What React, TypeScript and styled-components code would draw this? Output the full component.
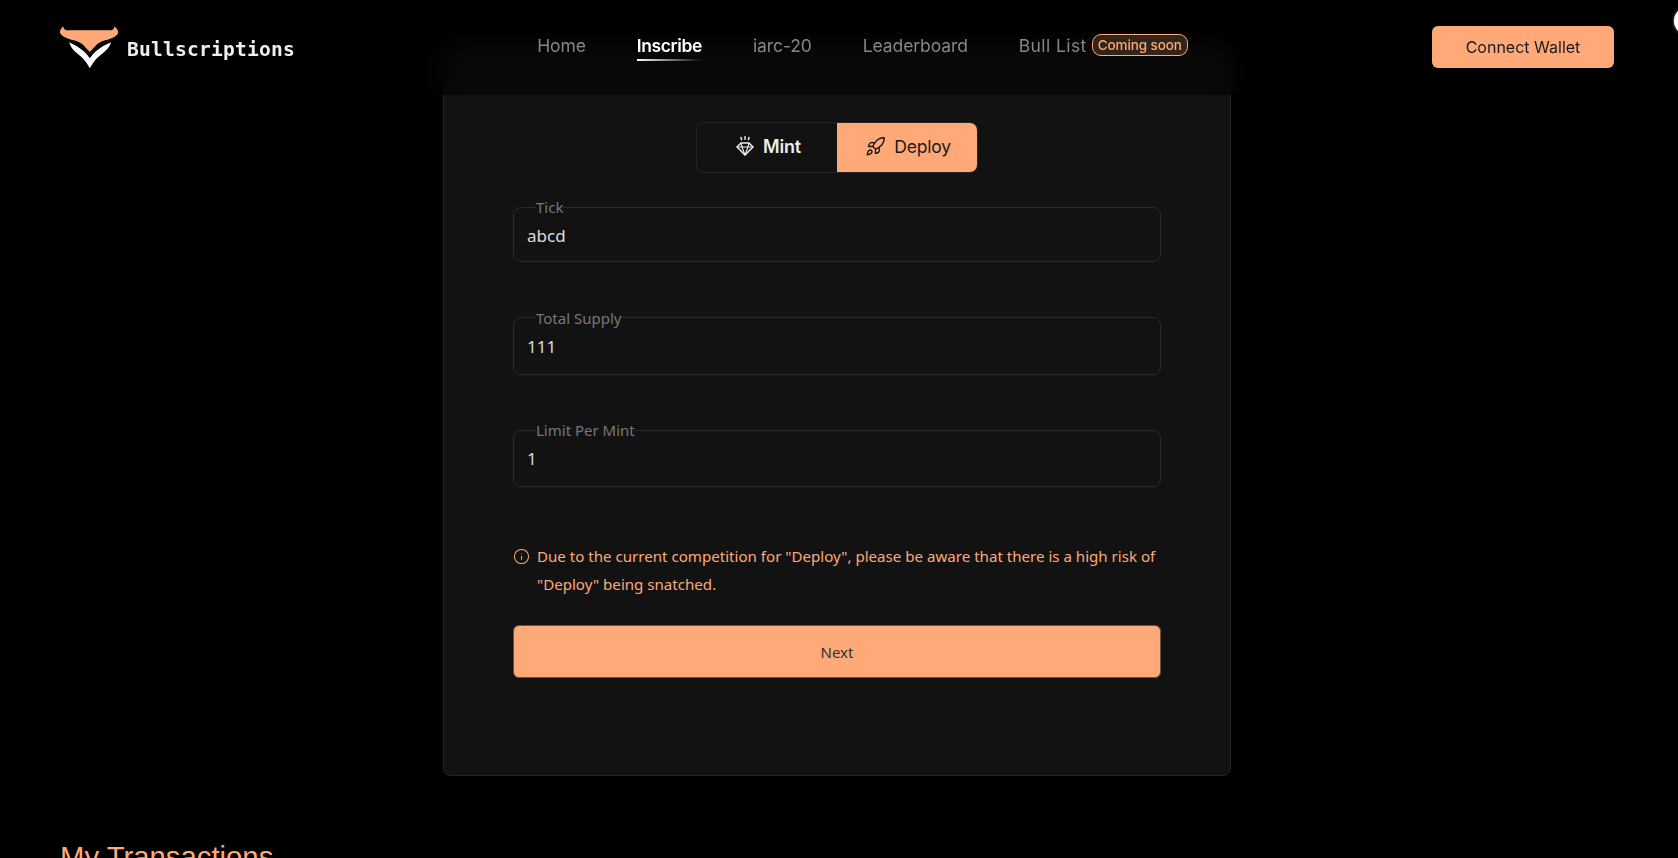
import styled, { createGlobalStyle } from 'styled-components';
import { Info, Rocket } from 'lucide-react';

const accent = '#ffa978';
const bodyFont = '"Noto Sans", "Open Sans", sans-serif';
const navFont = 'Inter, "Liberation Sans", sans-serif';

const GlobalStyle = createGlobalStyle`
  html, body {
    margin: 0;
    height: 100%;
    background: #000;
    overflow: hidden;
  }
  * {
    box-sizing: border-box;
  }
`;

const Header = styled.header`
  position: fixed;
  top: 0;
  left: 0;
  right: 0;
  height: 95px;
  padding: 0 64px 1px 59px;
  display: flex;
  align-items: center;
  justify-content: space-between;
  background: rgba(0, 0, 0, 0.5);
  backdrop-filter: blur(12px);
  z-index: 2;
`;

const Brand = styled.div`
  display: flex;
  align-items: center;
  gap: 7px;
`;

const BrandName = styled.span`
  font-family: "DejaVu Sans Mono", monospace;
  font-size: 19.6px;
  letter-spacing: 0.2px;
  font-weight: 600;
  color: #eee;
  margin-top: 5px;
`;

const Nav = styled.nav`
  display: flex;
  align-items: center;
  gap: 51px;
  margin: -4px 0 0 -2px;
`;

const NavLink = styled.a<{ $active?: boolean }>`
  position: relative;
  font-family: ${navFont};
  font-size: 17.5px;
  letter-spacing: ${(p) => (p.$active ? '-0.4px' : '-0.1px')};
  font-weight: ${(p) => (p.$active ? 600 : 400)};
  color: ${(p) => (p.$active ? '#fff' : '#878787')};
  display: flex;
  align-items: center;
  gap: 5px;

  ${(p) =>
    p.$active &&
    `
    &::after {
      content: '';
      position: absolute;
      left: 0;
      right: 0;
      bottom: -5px;
      height: 2px;
      background: linear-gradient(90deg, #fff, rgba(255, 255, 255, 0));
    }
  `}
`;

const BullLabel = styled.span`
  letter-spacing: 0.4px;
`;

const Badge = styled.span`
  height: 22px;
  padding: 0 5px;
  display: flex;
  align-items: center;
  border: 1px solid ${accent};
  border-radius: 9px;
  background: #33241b;
  color: ${accent};
  font-size: 13.5px;
  letter-spacing: -0.1px;
  font-weight: 500;
`;

const ConnectButton = styled.button`
  width: 182px;
  height: 42px;
  border: 0;
  border-radius: 6px;
  background: ${accent};
  color: #1a1a1a;
  font-family: ${navFont};
  font-size: 16px;
`;

const Orb = styled.div`
  position: fixed;
  top: 7px;
  left: 1674px;
  width: 28px;
  height: 28px;
  border-radius: 50%;
  background: #fff;
  box-shadow: 0 0 3px rgba(190, 210, 255, 0.7);
  z-index: 3;
`;

const Main = styled.main`
  padding: 45px 4px 0 0;
`;

const Card = styled.section`
  width: 788px;
  height: 731px;
  margin: 0 auto;
  padding: 76px 69px 0;
  background: #121212;
  border: 1px solid #252525;
  border-radius: 8px;
  display: flex;
  flex-direction: column;
`;

const Tabs = styled.div`
  align-self: center;
  display: flex;
  width: 282px;
  height: 51px;
  border: 1px solid #252525;
  border-radius: 8px;
  overflow: hidden;
  margin-bottom: 27px;
`;

const Tab = styled.button<{ $active?: boolean }>`
  flex: 1;
  border: 0;
  padding: 0 0 3px 2px;
  display: flex;
  align-items: center;
  justify-content: center;
  gap: 8px;
  font-family: ${navFont};
  font-size: ${(p) => (p.$active ? '17.5px' : '18px')};
  font-weight: ${(p) => (p.$active ? 400 : 600)};
  letter-spacing: -0.2px;
  background: ${(p) => (p.$active ? accent : 'transparent')};
  color: ${(p) => (p.$active ? '#1a1a1a' : '#eee')};
`;

const Field = styled.fieldset<{ $short?: boolean }>`
  flex: none;
  height: ${(p) => (p.$short ? '62px' : '64px')};
  margin: 0 0 48.5px;
  padding: 10px 13px 0;
  border: 1px solid #2a2a2a;
  border-radius: 8px;
`;

const FieldLabel = styled.legend`
  margin-left: 9px;
  padding: 0;
  font-family: ${bodyFont};
  font-size: 15px;
  line-height: 14px;
  color: #777;
`;

const FieldInput = styled.input`
  display: block;
  width: 100%;
  border: 0;
  outline: 0;
  padding: 0;
  background: transparent;
  font-family: ${bodyFont};
  font-size: 17px;
  color: #ddd;
`;

const Notice = styled.p`
  margin: 6.5px 0 27px;
  padding-left: 24px;
  position: relative;
  font-family: ${bodyFont};
  font-size: 15.1px;
  line-height: 28px;
  color: ${accent};

  svg {
    position: absolute;
    left: 0;
    top: 6px;
  }
`;

const NextButton = styled.button`
  height: 53px;
  flex: none;
  border: 1px solid #6b5040;
  border-radius: 6px;
  background: ${accent};
  color: #333;
  font-family: ${bodyFont};
  font-size: 15px;
`;

const SectionTitle = styled.h2`
  margin: 64px 0 0 60px;
  font-family: "Liberation Sans", sans-serif;
  font-size: 29.3px;
  font-weight: 400;
  color: ${accent};
`;

const DiamondIcon = () => (
  <svg width="20" height="22" viewBox="0 0 20 22" fill="none" stroke="#eee" strokeWidth="1.5" strokeLinejoin="round" strokeLinecap="round">
    <path d="M6 8h8l4 4-8 8-8-8z" />
    <path d="M2 12h16M7 12l3 8 3-8M6 8l1 4M14 8l-1 4" strokeWidth="1.1" />
    <path d="M6 2.5l.6 2M10 1.8v2.4M14 2.5l-.6 2" />
  </svg>
);

const BullLogo = () => (
  <svg width="61" height="45" viewBox="12 20 182 135">
    <path fill={accent} d="M24 24C25 31 28 36 38 36H166C174 36 178 31 178 24C186 32 192 40 188 46C182 55 170 60 150 66C136 70 127 76 120 84C114 91 108 97 104 101C100 97 94 91 88 84C81 76 70 70 56 66C36 60 22 55 16 46C12 40 16 32 24 24Z" />
    <path fill="#fff" d="M42 72C56 78 70 86 82 96C91 103 98 112 104 120C110 112 117 103 126 96C138 86 152 78 168 72C164 86 154 97 140 107C128 115 115 129 104 150C93 129 80 115 68 107C54 97 46 86 42 72Z" />
  </svg>
);

const fields = [
  { label: 'Tick', value: 'abcd', short: true },
  { label: 'Total Supply', value: '111' },
  { label: 'Limit Per Mint', value: '1' },
];

export default function App() {
  return (
    <>
      <GlobalStyle />
      <Header>
        <Brand>
          <BullLogo />
          <BrandName>Bullscriptions</BrandName>
        </Brand>
        <Nav>
          <NavLink>Home</NavLink>
          <NavLink $active>Inscribe</NavLink>
          <NavLink>iarc-20</NavLink>
          <NavLink>Leaderboard</NavLink>
          <NavLink>
            <BullLabel>Bull List</BullLabel>
            <Badge>Coming soon</Badge>
          </NavLink>
        </Nav>
        <ConnectButton>Connect Wallet</ConnectButton>
      </Header>
      <Orb />
      <Main>
        <Card>
          <Tabs>
            <Tab>
              <DiamondIcon />
              Mint
            </Tab>
            <Tab $active>
              <Rocket size={21} strokeWidth={1.6} />
              Deploy
            </Tab>
          </Tabs>
          {fields.map((f) => (
            <Field key={f.label} $short={f.short}>
              <FieldLabel>{f.label}</FieldLabel>
              <FieldInput defaultValue={f.value} />
            </Field>
          ))}
          <Notice>
            <Info size={17} strokeWidth={1.5} />
            Due to the current competition for "Deploy", please be aware that there is a high risk of "Deploy" being snatched.
          </Notice>
          <NextButton>Next</NextButton>
        </Card>
        <SectionTitle>My Transactions</SectionTitle>
      </Main>
    </>
  );
}
